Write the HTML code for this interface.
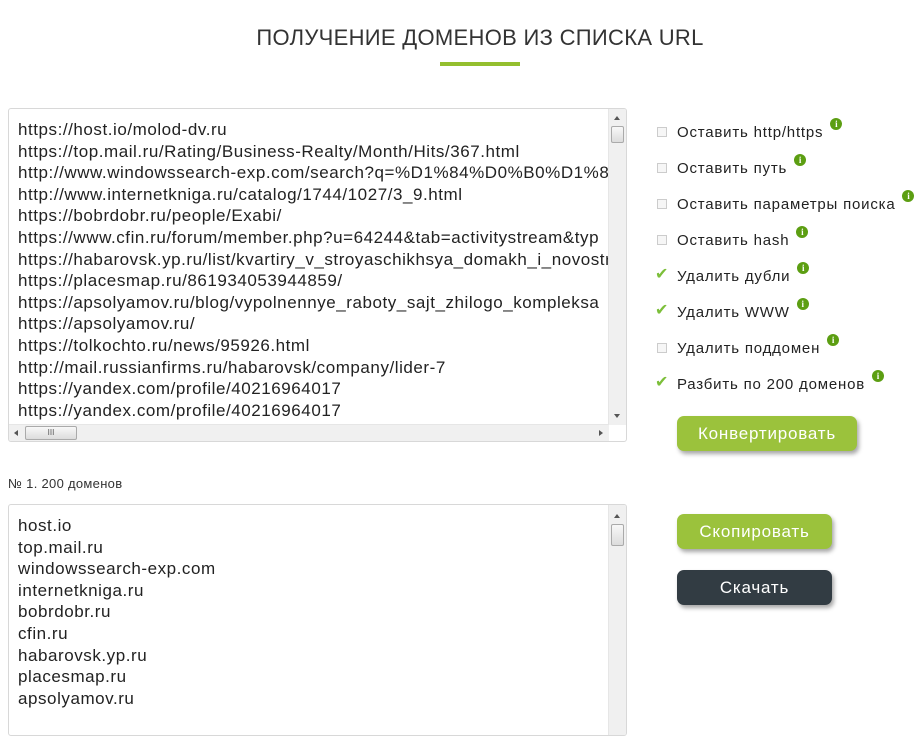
<!DOCTYPE html>
<html><head><meta charset="utf-8"><style>
body{margin:0;width:918px;height:710px;background:#fff;font-family:"Liberation Sans",sans-serif;position:relative;overflow:hidden;color:#222}
.title{position:absolute;top:25px;left:0;width:960px;text-align:center;font-size:22px;color:#333;letter-spacing:0.3px}
.bar{position:absolute;left:440px;top:62px;width:80px;height:4px;background:#94bf2e}
.ta{position:absolute;left:8px;width:617px;border:1px solid #d8d8d8;border-radius:3px;overflow:hidden;background:#fff}
.lines{position:absolute;left:9px;top:10px;font-size:17px;line-height:21.6px;white-space:pre;color:#222;letter-spacing:0.55px}
.vs{position:absolute;right:0;top:0;width:17px;background:#f0f0f0;border-left:1px solid #e6e6e6}
.hs{position:absolute;left:0;bottom:0;height:16px;background:#f0f0f0;border-top:1px solid #e6e6e6}
.thumb{position:absolute;background:linear-gradient(#f8f8f8,#dcdcdc);border:1px solid #aaa;border-radius:2px}
.opt{position:absolute;left:657px;font-size:15px;color:#222}
.cb{position:absolute;left:0;top:2px;width:8px;height:8px;border:1px solid #ccc;background:#f6f6f6}
.lbl{position:absolute;left:20px;top:-1px;white-space:nowrap;letter-spacing:0.8px}
.i{display:inline-block;width:12px;height:12px;border-radius:50%;background:#5c9e12;color:#fff;font-size:9px;font-weight:bold;text-align:center;line-height:12px;vertical-align:top;margin-left:7px;margin-top:-6px;font-family:"Liberation Serif",serif;letter-spacing:0}
.ck{position:absolute;left:-2px;top:-5px;color:#7cbf3a;font-size:16px}
.btn{position:absolute;left:677px;height:35px;border-radius:7px;color:#fff;font-size:17px;text-align:center;line-height:35px;box-shadow:2px 3px 4px rgba(0,0,0,.35);letter-spacing:0.8px}
.g{background:#9bc23c}.d{background:#323c43}
</style></head><body>
<div class="title">ПОЛУЧЕНИЕ ДОМЕНОВ ИЗ СПИСКА URL</div>
<div class="bar"></div>

<div class="ta" style="top:108px;height:332px">
<div class="lines">https://host.io/molod-dv.ru
https://top.mail.ru/Rating/Business-Realty/Month/Hits/367.html
http://www.windowssearch-exp.com/search?q=%D1%84%D0%B0%D1%80
http://www.internetkniga.ru/catalog/1744/1027/3_9.html
https://bobrdobr.ru/people/Exabi/
https://www.cfin.ru/forum/member.php?u=64244&amp;tab=activitystream&amp;typ
https://habarovsk.yp.ru/list/kvartiry_v_stroyaschikhsya_domakh_i_novostr
https://placesmap.ru/861934053944859/
https://apsolyamov.ru/blog/vypolnennye_raboty_sajt_zhilogo_kompleksa
https://apsolyamov.ru/
https://tolkochto.ru/news/95926.html
http://mail.russianfirms.ru/habarovsk/company/lider-7
https://yandex.com/profile/40216964017
https://yandex.com/profile/40216964017</div>
<div class="vs" style="height:316px"><div style="position:absolute;left:5px;top:7px;border:3px solid transparent;border-bottom:4px solid #555;border-top:0"></div><div class="thumb" style="left:2px;top:17px;width:11px;height:15px"></div><div style="position:absolute;left:5px;top:305px;border:3px solid transparent;border-top:4px solid #555;border-bottom:0"></div></div>
<div class="hs" style="width:600px"><div style="position:absolute;left:5px;top:5px;border:3px solid transparent;border-right:4px solid #555;border-left:0"></div><div class="thumb" style="left:16px;top:1px;width:50px;height:12px;font-size:8px;text-align:center;line-height:12px;color:#555">III</div><div style="position:absolute;left:590px;top:5px;border:3px solid transparent;border-left:4px solid #555;border-right:0"></div></div>
</div>

<div style="position:absolute;left:8px;top:476px;font-size:13px;color:#333;letter-spacing:0.3px">№ 1. 200 доменов</div>

<div class="ta" style="top:504px;height:230px">
<div class="lines">host.io
top.mail.ru
windowssearch-exp.com
internetkniga.ru
bobrdobr.ru
cfin.ru
habarovsk.yp.ru
placesmap.ru
apsolyamov.ru</div>
<div class="vs" style="height:230px"><div style="position:absolute;left:5px;top:9px;border:3px solid transparent;border-bottom:4px solid #555;border-top:0"></div><div class="thumb" style="left:2px;top:19px;width:11px;height:20px"></div></div>
</div>

<div class="opt" style="top:125px"><div class="cb"></div><div class="lbl">Оставить http/https<span class="i">i</span></div></div>
<div class="opt" style="top:161px"><div class="cb"></div><div class="lbl">Оставить путь<span class="i">i</span></div></div>
<div class="opt" style="top:197px"><div class="cb"></div><div class="lbl">Оставить параметры поиска<span class="i">i</span></div></div>
<div class="opt" style="top:233px"><div class="cb"></div><div class="lbl">Оставить hash<span class="i">i</span></div></div>
<div class="opt" style="top:269px"><span class="ck">✔</span><div class="lbl">Удалить дубли<span class="i">i</span></div></div>
<div class="opt" style="top:305px"><span class="ck">✔</span><div class="lbl">Удалить WWW<span class="i">i</span></div></div>
<div class="opt" style="top:341px"><div class="cb"></div><div class="lbl">Удалить поддомен<span class="i">i</span></div></div>
<div class="opt" style="top:377px"><span class="ck">✔</span><div class="lbl">Разбить по 200 доменов<span class="i">i</span></div></div>

<div class="btn g" style="top:416px;width:180px">Конвертировать</div>
<div class="btn g" style="top:514px;width:155px">Скопировать</div>
<div class="btn d" style="top:570px;width:155px">Скачать</div>
</body></html>
